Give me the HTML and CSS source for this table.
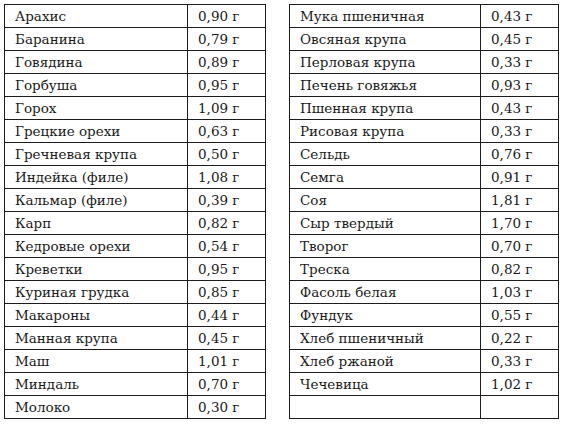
FILE: index.html
```html
<!DOCTYPE html>
<html lang="ru">
<head>
<meta charset="utf-8">
<link rel="stylesheet" href="styles.css">
</head>
<body>
<div class="wrap">
<table class="t t-left">
<colgroup><col class="c-name-l"><col class="c-val"></colgroup>
<tr><td>Арахис</td><td>0,90 г</td></tr>
<tr><td>Баранина</td><td>0,79 г</td></tr>
<tr><td>Говядина</td><td>0,89 г</td></tr>
<tr><td>Горбуша</td><td>0,95 г</td></tr>
<tr><td>Горох</td><td>1,09 г</td></tr>
<tr><td>Грецкие орехи</td><td>0,63 г</td></tr>
<tr><td>Гречневая крупа</td><td>0,50 г</td></tr>
<tr><td>Индейка (филе)</td><td>1,08 г</td></tr>
<tr><td>Кальмар (филе)</td><td>0,39 г</td></tr>
<tr><td>Карп</td><td>0,82 г</td></tr>
<tr><td>Кедровые орехи</td><td>0,54 г</td></tr>
<tr><td>Креветки</td><td>0,95 г</td></tr>
<tr><td>Куриная грудка</td><td>0,85 г</td></tr>
<tr><td>Макароны</td><td>0,44 г</td></tr>
<tr><td>Манная крупа</td><td>0,45 г</td></tr>
<tr><td>Маш</td><td>1,01 г</td></tr>
<tr><td>Миндаль</td><td>0,70 г</td></tr>
<tr><td>Молоко</td><td>0,30 г</td></tr>
</table>
<table class="t t-right">
<colgroup><col class="c-name-r"><col class="c-val"></colgroup>
<tr><td>Мука пшеничная</td><td>0,43 г</td></tr>
<tr><td>Овсяная крупа</td><td>0,45 г</td></tr>
<tr><td>Перловая крупа</td><td>0,33 г</td></tr>
<tr><td>Печень говяжья</td><td>0,93 г</td></tr>
<tr><td>Пшенная крупа</td><td>0,43 г</td></tr>
<tr><td>Рисовая крупа</td><td>0,33 г</td></tr>
<tr><td>Сельдь</td><td>0,76 г</td></tr>
<tr><td>Семга</td><td>0,91 г</td></tr>
<tr><td>Соя</td><td>1,81 г</td></tr>
<tr><td>Сыр твердый</td><td>1,70 г</td></tr>
<tr><td>Творог</td><td>0,70 г</td></tr>
<tr><td>Треска</td><td>0,82 г</td></tr>
<tr><td>Фасоль белая</td><td>1,03 г</td></tr>
<tr><td>Фундук</td><td>0,55 г</td></tr>
<tr><td>Хлеб пшеничный</td><td>0,22 г</td></tr>
<tr><td>Хлеб ржаной</td><td>0,33 г</td></tr>
<tr><td>Чечевица</td><td>1,02 г</td></tr>
<tr><td></td><td></td></tr>
</table>
</div>
</body>
</html>
```

FILE: styles.css
```css
html, body {
  margin: 0;
  padding: 0;
  background: #fff;
}
.wrap {
  display: flex;
  align-items: flex-start;
  gap: 23px;
  padding: 4px 0 0 4px;
}
.t {
  border-collapse: collapse;
  table-layout: fixed;
  font-family: "DejaVu Serif", "Liberation Serif", serif;
  font-size: 13.5px;
  color: #1a1a1a;
}
.t-left { width: 262px; }
.t-right { width: 269px; }
.c-name-l { width: 183px; }
.c-name-r { width: 191px; }
.c-val { width: 78px; }
.t td {
  border: 1px solid #1c1c1c;
  height: 22px;
  padding: 0 0 0 10px;
  line-height: 22px;
  white-space: nowrap;
  overflow: hidden;
}
```
